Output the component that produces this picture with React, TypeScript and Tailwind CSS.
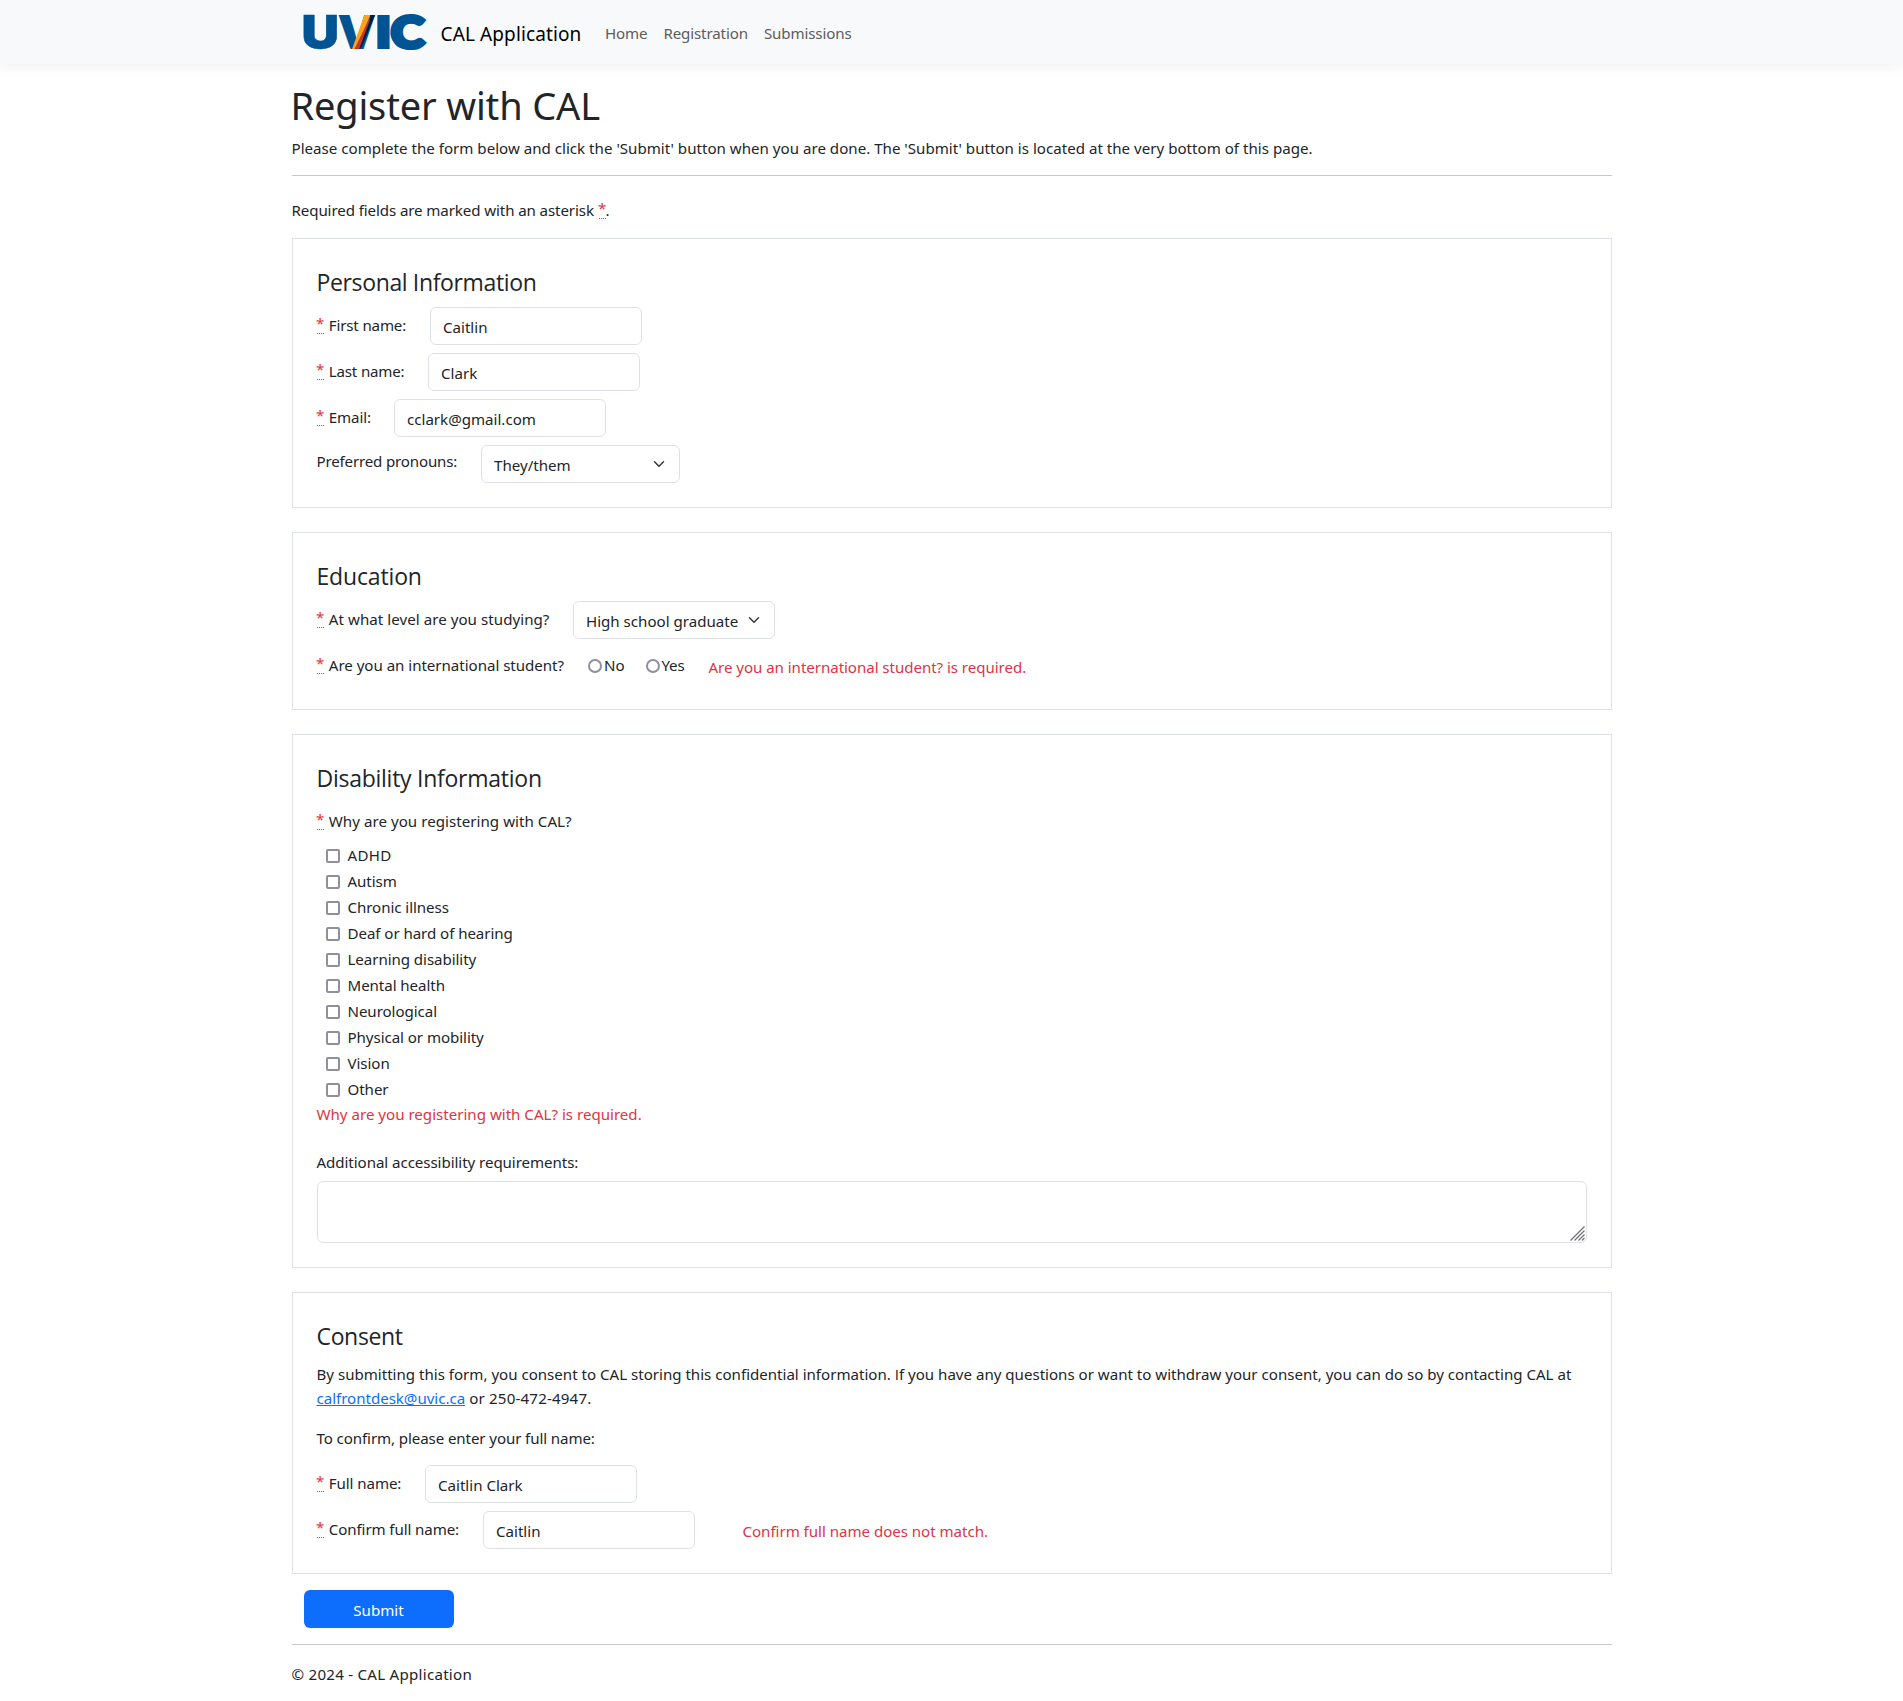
import React from "react";
import clsx from "clsx";

const conditions = [
  "ADHD",
  "Autism",
  "Chronic illness",
  "Deaf or hard of hearing",
  "Learning disability",
  "Mental health",
  "Neurological",
  "Physical or mobility",
  "Vision",
  "Other",
];

function Logo() {
  return (
    <svg viewBox="0 0 124 40" className="h-10 w-[124px] shrink-0 overflow-visible" aria-label="UVIC">
      <g fill="#005493">
        <text x="-2.6" y="37.2" fontSize="46.8" textLength="37.5" lengthAdjust="spacingAndGlyphs" stroke="#005493" strokeWidth="0.6" className="font-['Inter'] font-black">U</text>
        <text x="33.4" y="37" fontSize="46.6" textLength="38.5" lengthAdjust="spacingAndGlyphs" className="font-['Inter'] font-black">V</text>
        <text x="70.4" y="37" fontSize="46.6" textLength="18" lengthAdjust="spacingAndGlyphs" className="font-['Inter'] font-black">I</text>
        <text x="87" y="35.6" fontSize="43" textLength="33" lengthAdjust="spacingAndGlyphs" stroke="#005493" strokeWidth="4.2" className="font-['Lato'] font-black">C</text>
      </g>
      <polygon points="60.5,3 66.4,3 52.2,37 48,37" fill="#f9a51a" />
      <polygon points="64.6,8 66.6,8.5 56,37 50.5,37" fill="#c5352b" />
      <polygon points="66.3,3 71.2,3 58.6,33 56.2,37 55.2,37 65.6,9" fill="#002145" />
    </svg>
  );
}

function Star() {
  return (
    <abbr
      title="required"
      className="inline-block h-[21px] w-[7px] shrink-0 border-b border-dotted border-[#dc3545] leading-5 text-[#dc3545] no-underline"
    >
      <span className="-ml-[0.5px]">*</span>
    </abbr>
  );
}

function Label({ children, required = true, className }: { children: React.ReactNode; required?: boolean; className: string }) {
  return (
    <label className={clsx("flex shrink-0 gap-[5.3px] whitespace-nowrap leading-6", required ? "pt-1.5" : "pt-1", className)}>
      {required && <Star />}
      <span>{children}</span>
    </label>
  );
}

const control = "h-[38px] rounded-md border border-[#dee2e6] bg-white px-3 pt-[7px] pb-[5px] leading-6 text-[#212529] outline-none";

function TextInput({ value }: { value: string }) {
  return <input type="text" defaultValue={value} className={clsx(control, "w-[212px]")} />;
}

function Select({ value, className }: { value: string; className: string }) {
  return (
    <button type="button" className={clsx(control, "flex items-start justify-between whitespace-nowrap pr-3.5", className)}>
      <span>{value}</span>
      <svg viewBox="0 0 16 16" className="mt-[5px] size-3 shrink-0" fill="none" stroke="#343a40" strokeWidth="2" strokeLinecap="round" strokeLinejoin="round">
        <path d="m2 5 6 6 6-6" />
      </svg>
    </button>
  );
}

function Card({ title, titleClass, children }: { title: string; titleClass: string; children: React.ReactNode }) {
  return (
    <section className="border border-[#dee2e6] px-6 pt-[29px] pb-6">
      <h2 className={clsx("h-[29px] font-['Open_Sans'] text-[23px] leading-[29px]", titleClass)}>{title}</h2>
      {children}
    </section>
  );
}

export default function App() {
  return (
    <div className="min-h-[1701px] bg-white font-['Noto_Sans',sans-serif] text-[15.1px] leading-6 text-[#212529]">
      <header className="h-16 bg-[#f8f9fa] shadow-[0_4px_12px_rgba(0,0,0,0.05)]">
        <nav className="mx-auto flex h-full w-[1320px] items-start pl-3">
          <a className="mt-3 flex">
            <Logo />
            <span className="ml-[13px] mt-[7px] text-[19px] leading-[30px] tracking-[0.12px] text-black">CAL Application</span>
          </a>
          <div className="mt-[21px] ml-[23.5px] flex gap-4 tracking-[-0.12px] text-[#5b5c5c]">
            <a>Home</a>
            <a>Registration</a>
            <a>Submissions</a>
          </div>
        </nav>
      </header>

      <main className="mx-auto w-[1320px] pt-[17px]">
        <h1 className="-ml-px text-[38px] leading-[48px] tracking-[-0.16px]">Register with CAL</h1>
        <p className="mt-[7px] tracking-[0.012px]">
          Please complete the form below and click the 'Submit' button when you are done. The 'Submit' button is located at the very bottom of this page.
        </p>
        <hr className="mt-[15px] border-[#c7c8c9]" />
        <p className="mt-[22px] flex h-6">
          <span className="w-[307px] tracking-[-0.1px]">Required fields are marked with an asterisk</span>
          <Star />.
        </p>

        <form className="mt-4 flex flex-col gap-6">
          <Card title="Personal Information" titleClass="tracking-[-0.36px]">
            <div className="mt-2.5 flex flex-col gap-2">
              <div className="flex">
                <Label className="w-[113.5px] tracking-[-0.16px]">First name:</Label>
                <TextInput value="Caitlin" />
              </div>
              <div className="flex">
                <Label className="w-[111.5px] tracking-[-0.18px]">Last name:</Label>
                <TextInput value="Clark" />
              </div>
              <div className="flex">
                <Label className="w-[77.5px] tracking-[-0.1px]">Email:</Label>
                <TextInput value="cclark@gmail.com" />
              </div>
              <div className="flex">
                <Label required={false} className="w-[164.5px] tracking-[-0.17px]">Preferred pronouns:</Label>
                <Select value="They/them" className="w-[199px]" />
              </div>
            </div>
          </Card>

          <Card title="Education" titleClass="tracking-[-0.16px]">
            <div className="mt-2.5 flex flex-col gap-2">
              <div className="flex">
                <Label className="w-[256.5px] tracking-[0.05px]">At what level are you studying?</Label>
                <Select value="High school graduate" className="w-[202px]" />
              </div>
              <div className="flex h-[38px]">
                <Label className="w-[271.5px] tracking-[-0.03px]">Are you an international student?</Label>
                <label className="flex w-[58px] gap-0.5 pt-1.5">
                  <input type="radio" name="international" className="mt-1.5 size-3.5 appearance-none rounded-full border-2 border-[#8f8f9d]" />
                  No
                </label>
                <label className="flex w-[62.5px] gap-[1.5px] pt-1.5 tracking-[-0.2px]">
                  <input type="radio" name="international" className="mt-1.5 size-3.5 appearance-none rounded-full border-2 border-[#8f8f9d]" />
                  Yes
                </label>
                <span className="pt-2 tracking-[-0.05px] text-[#dc3545]">Are you an international student? is required.</span>
              </div>
            </div>
          </Card>

          <Card title="Disability Information" titleClass="tracking-[-0.26px]">
            <div className="mt-4 flex h-6 items-start">
              <Label className="-mt-1.5 tracking-[0.04px]">Why are you registering with CAL?</Label>
            </div>
            <div className="mt-2.5 flex flex-col pl-[9.5px]">
              {conditions.map((name) => (
                <label
                  key={name}
                  className={clsx("flex h-[26px] gap-[7.5px]", name === "ADHD" ? "tracking-[0.3px]" : "tracking-[-0.06px]")}
                >
                  <input type="checkbox" className="mt-1.5 size-3.5 appearance-none rounded-[2px] border-2 border-[#8f8f9d]" />
                  {name}
                </label>
              ))}
            </div>
            <p className="-mt-px text-[#dc3545]">Why are you registering with CAL? is required.</p>
            <p className="mt-6 tracking-[-0.06px]">Additional accessibility requirements:</p>
            <div className="relative mt-[7px] h-[62px]">
              <textarea className="block h-full w-full resize-none rounded-md border border-[#dee2e6] outline-none" />
              <svg viewBox="0 0 15 15" className="absolute right-0.5 bottom-0.5 size-[15px]" stroke="#6f6f6f" strokeWidth="1.2">
                <path d="M0.5 14.5 14.5 0.5M4.5 14.5 14.5 4.5M8.5 14.5 14.5 8.5M12 14.5 14.5 12" />
              </svg>
            </div>
          </Card>

          <Card title="Consent" titleClass="tracking-[-0.35px]">
            <p className="mt-[11px]">
              <span className="block whitespace-nowrap text-[15.08px]">
                By submitting this form, you consent to CAL storing this confidential information. <span className="font-['Open_Sans']">I</span>f you have any questions or want to withdraw your consent, you can do so by contacting CAL at
              </span>
              <a className="tracking-[-0.03px] text-[#0d6efd] underline">calfrontdesk@uvic.ca</a>
              <span className="tracking-[0.18px]"> or 250-472-4947.</span>
            </p>
            <p className="mt-4 tracking-[-0.1px]">To confirm, please enter your full name:</p>
            <div className="mt-[15px] flex flex-col gap-2">
              <div className="flex">
                <Label className="w-[108.5px] tracking-[-0.08px]">Full name:</Label>
                <TextInput value="Caitlin Clark" />
              </div>
              <div className="flex">
                <Label className="w-[166.5px] tracking-[-0.1px]">Confirm full name:</Label>
                <TextInput value="Caitlin" />
                <span className="ml-[47.5px] pt-2 tracking-[-0.03px] text-[#dc3545]">Confirm full name does not match.</span>
              </div>
            </div>
          </Card>
        </form>

        <button type="button" className="mt-4 ml-3 block h-[38px] w-[150px] rounded-md bg-[#0d6efd] pt-0.5 text-white">
          Submit
        </button>
      </main>

      <footer className="mx-auto mt-4 w-[1320px] border-t border-[#c7c8c9] pt-[17px] tracking-[0.26px]">© 2024 - CAL Application</footer>
    </div>
  );
}
